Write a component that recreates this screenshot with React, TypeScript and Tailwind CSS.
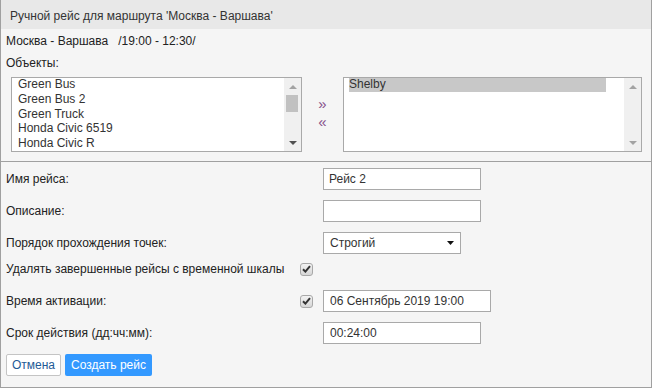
import React from "react";

const Tri = ({ up, color }: { up?: boolean; color: string }) => (
  <svg width="8" height="4" viewBox="0 0 8 4">
    <path d={up ? "M0 4 L4 0 L8 4 Z" : "M0 0 L8 0 L4 4 Z"} fill={color} />
  </svg>
);

const ScrollBar = ({ thumb }: { thumb?: boolean }) => (
  <div className="w-[17px] h-full bg-[#f0f0f0] flex flex-col shrink-0">
    <div className="h-[17px] flex items-center justify-center">
      <Tri up color="#a3a3a3" />
    </div>
    {thumb ? <div className="h-[17px] w-[12px] ml-[2px] bg-[#c1c1c1]" /> : null}
    <div className="flex-1" />
    <div className="h-[17px] flex items-center justify-center">
      <Tri color={thumb ? "#505050" : "#a3a3a3"} />
    </div>
  </div>
);

const Check = () => (
  <div className="w-[13px] h-[13px] rounded-[3px] border border-[#a8a8a8] bg-gradient-to-b from-[#f2f2f2] to-[#d6d6d6] flex items-center justify-center">
    <svg width="9" height="8" viewBox="0 0 9 8">
      <path d="M1 4.2 L3.4 6.6 L8 1.2" stroke="#333" strokeWidth="2" fill="none" />
    </svg>
  </div>
);

const Row = ({
  label,
  check,
  children,
  className,
}: {
  label: string;
  check?: boolean;
  children?: React.ReactNode;
  className?: string;
}) => (
  <div className={"flex items-center h-[22px] " + (className || "")}>
    <div className="w-[294px] leading-[14px] whitespace-nowrap">{label}</div>
    <div className="w-[13px] flex items-center">{check ? <Check /> : null}</div>
    <div className="ml-[10px]">{children}</div>
  </div>
);

export default function App() {
  const left = ["Green Bus", "Green Bus 2", "Green Truck", "Honda Civic 6519", "Honda Civic R"];
  return (
    <div className="w-[652px] h-[388px] border-x border-b border-[#a0a0a0] bg-[#f5f5f5] flex flex-col font-['Liberation_Sans',Arial,sans-serif] text-[12px] text-[#222] overflow-hidden">
      <div className="h-[29px] shrink-0 bg-[#e8e8e8] flex items-center pl-[9px] pt-[2px] text-[#333] leading-[14px]">
        Ручной рейс для маршрута 'Москва - Варшава'
      </div>
      <div className="pl-[5px] shrink-0">
        <div className="mt-[5px] leading-[14px] h-[14px] whitespace-pre">Москва - Варшава   /19:00 - 12:30/</div>
        <div className="mt-[8px] leading-[14px] h-[14px]">Объекты:</div>
        <div className="mt-[7px] flex h-[75px] ml-[5px]">
          <div className="w-[291px] h-[75px] border border-[#a9a9a9] bg-white flex overflow-hidden">
            <div className="flex-1 pl-[6px] text-[#333] overflow-hidden">
              {left.map((t) => (
                <div key={t} className="h-[14.75px] leading-[12px] whitespace-nowrap">
                  {t}
                </div>
              ))}
            </div>
            <ScrollBar thumb />
          </div>
          <div className="w-[41px] flex flex-col items-center justify-center pb-[4px] text-[#86508a] text-[15px]">
            <div className="h-[17.5px] leading-[17.5px]">»</div>
            <div className="h-[17.5px] leading-[17.5px]">«</div>
          </div>
          <div className="w-[299px] h-[75px] border border-[#a9a9a9] bg-white flex overflow-hidden">
            <div className="flex-1 pl-[5px] pr-[18px] text-[#333]">
              <div className="h-[14px] leading-[12px] bg-[#c8c8c8]">Shelby</div>
            </div>
            <ScrollBar />
          </div>
        </div>
      </div>
      <div className="mt-[9px] h-px bg-[#a0a0a0] shrink-0" />
      <div className="pl-[5px] flex flex-col">
        <Row label="Имя рейса:" className="mt-[6px]">
          <div className="w-[158px] h-[22px] border border-[#a9a9a9] bg-white pl-[5px] leading-[20px] text-[#333]">Рейс 2</div>
        </Row>
        <Row label="Описание:" className="mt-[10px]">
          <div className="w-[158px] h-[22px] border border-[#a9a9a9] bg-white" />
        </Row>
        <Row label="Порядок прохождения точек:" className="mt-[10px]">
          <div className="w-[138px] h-[22px] border border-[#a9a9a9] bg-white pl-[6px] pr-[6px] flex items-center justify-between text-[#333]">
            <span className="leading-[14px]">Строгий</span>
            <svg width="7" height="4" viewBox="0 0 7 4">
              <path d="M0 0 L7 0 L3.5 4 Z" fill="#111" />
            </svg>
          </div>
        </Row>
        <Row label="Удалять завершенные рейсы с временной шкалы" check className="mt-[4px]" />
        <Row label="Время активации:" check className="mt-[10px]">
          <div className="w-[168px] h-[22px] border border-[#a9a9a9] bg-white pl-[6px] leading-[20px] text-[#333]">06 Сентябрь 2019 19:00</div>
        </Row>
        <Row label="Срок действия (дд:чч:мм):" className="mt-[10px]">
          <div className="w-[158px] h-[22px] border border-[#a9a9a9] bg-white pl-[6px] leading-[20px] text-[#333]">00:24:00</div>
        </Row>
        <div className="mt-[10px] flex gap-[4px]">
          <button className="w-[55px] h-[22px] border border-[#c4c4c4] rounded-[2px] bg-white text-[#1f5a96] leading-[20px]">Отмена</button>
          <button className="w-[87px] h-[22px] rounded-[2px] bg-[#3399ff] text-white leading-[22px]">Создать рейс</button>
        </div>
      </div>
    </div>
  );
}
